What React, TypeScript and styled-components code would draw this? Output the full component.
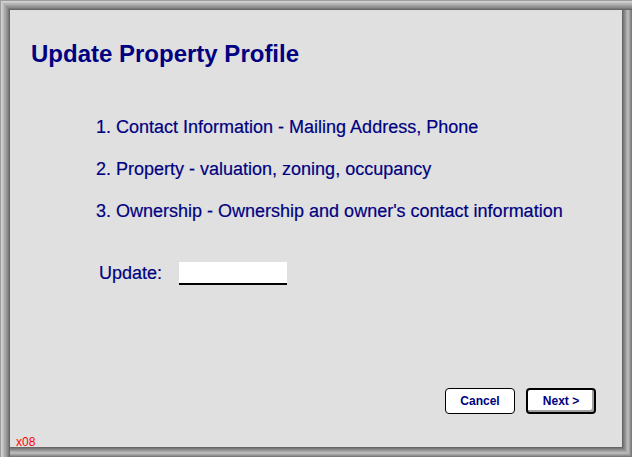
import React from "react";
import styled, { createGlobalStyle } from "styled-components";

const Global = createGlobalStyle`
  html, body { margin: 0; padding: 0; background: #e0e0e0; }
  body { font-family: "Liberation Sans", Arial, sans-serif; }
`;

const tl = ["#9c9c9c", "#d2d2d2", "#c6c6c6", "#bababa", "#aeaeae", "#a2a2a2", "#969696", "#8a8a8a", "#7a7a7a", "#666666"];
const br = ["#7a7a7a", "#8e8e8e", "#a2a2a2", "#b4b4b4", "#b8b8b8", "#a8a8a8", "#989898", "#888888", "#787878", "#666666"];
const frameShadow = [
  ...tl.map((c, i) => `inset ${i + 1}px ${i + 1}px 0 ${c}`),
  ...br.map((c, i) => `inset -${i + 1}px -${i + 1}px 0 ${c}`),
].join(", ");

const Frame = styled.div`
  box-sizing: border-box;
  width: 632px;
  height: 457px;
  background: #e0e0e0;
  box-shadow: ${frameShadow};
  display: flex;
  flex-direction: column;
  padding: 40px 36px 8px 16px;
  color: #000080;
`;

const Title = styled.h1`
  margin: 0 0 0 15px;
  font-size: 24px;
  line-height: 28px;
  font-weight: bold;
`;

const List = styled.div`
  display: flex;
  flex-direction: column;
  gap: 20px;
  margin: 48px 0 0 80px;
`;

const Item = styled.div`
  font-size: 18px;
  line-height: 22px;
  -webkit-text-stroke: 0.2px #000080;
`;

const UpdateRow = styled.div`
  display: flex;
  align-items: flex-start;
  margin: 40px 0 0 83px;
`;

const Label = styled.span`
  font-size: 18px;
  line-height: 22px;
  width: 80px;
  -webkit-text-stroke: 0.2px #000080;
`;

const Field = styled.div`
  box-sizing: border-box;
  width: 108px;
  height: 23px;
  background: #ffffff;
  border-bottom: 2px solid #000000;
`;

const Spacer = styled.div`
  flex: 1;
`;

const ButtonRow = styled.div`
  display: flex;
  justify-content: flex-end;
  gap: 11px;
`;

const Button = styled.button<{ $primary?: boolean }>`
  box-sizing: border-box;
  width: 70px;
  height: 26px;
  padding: 0;
  background: #ffffff;
  border: ${(p) => (p.$primary ? "2px" : "1px")} solid #000000;
  border-radius: 4px;
  box-shadow: ${(p) => (p.$primary ? "inset -2px -2px 0 #a0a0a0" : "none")};
  font-family: "Liberation Sans", Arial, sans-serif;
  font-size: 12px;
  font-weight: bold;
  color: #000080;
  cursor: pointer;
`;

const Footer = styled.div`
  margin-top: 21px;
  font-size: 12px;
  line-height: 14px;
  color: #ff0000;
`;

export default function App() {
  return (
    <>
      <Global />
      <Frame>
        <Title>Update Property Profile</Title>
        <List>
          <Item>1. Contact Information - Mailing Address, Phone</Item>
          <Item>2. Property - valuation, zoning, occupancy</Item>
          <Item>3. Ownership - Ownership and owner's contact information</Item>
        </List>
        <UpdateRow>
          <Label>Update:</Label>
          <Field />
        </UpdateRow>
        <Spacer />
        <ButtonRow>
          <Button>Cancel</Button>
          <Button $primary>Next &gt;</Button>
        </ButtonRow>
        <Footer>x08</Footer>
      </Frame>
    </>
  );
}
